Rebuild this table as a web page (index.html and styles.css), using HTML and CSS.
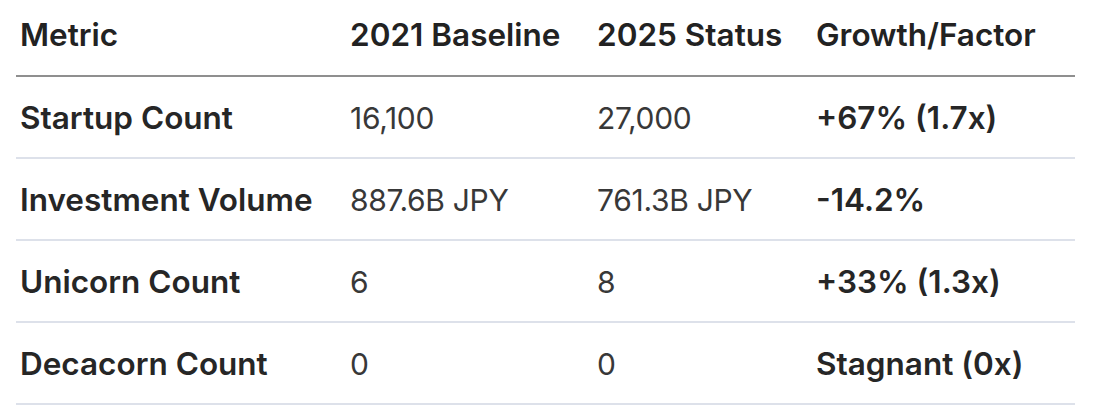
FILE: index.html
```html
<!DOCTYPE html>
<html>
<head>
<meta charset="utf-8">
<link rel="stylesheet" href="styles.css">
</head>
<body>
<table class="data-table">
  <colgroup>
    <col class="c1"><col class="c2"><col class="c3"><col class="c4">
  </colgroup>
  <thead>
    <tr><th>Metric</th><th>2021 Baseline</th><th>2025 Status</th><th>Growth/Factor</th></tr>
  </thead>
  <tbody>
    <tr><td class="label">Startup Count</td><td>16,100</td><td>27,000</td><td class="strong">+67% (1.7x)</td></tr>
    <tr><td class="label">Investment Volume</td><td>887.6B JPY</td><td>761.3B JPY</td><td class="strong">-14.2%</td></tr>
    <tr><td class="label">Unicorn Count</td><td>6</td><td>8</td><td class="strong">+33% (1.3x)</td></tr>
    <tr><td class="label">Decacorn Count</td><td>0</td><td>0</td><td class="strong">Stagnant (0x)</td></tr>
  </tbody>
</table>
</body>
</html>
```
FILE: styles.css
```css
html, body {
  margin: 0;
  padding: 0;
  background: #ffffff;
}
body {
  font-family: Inter, "Liberation Sans", sans-serif;
  color: #2b2b2b;
}
.data-table {
  margin-left: 16px;
  width: 1059px;
  border-collapse: collapse;
  table-layout: fixed;
  font-size: 30px;
  line-height: 44px;
}
.c1 { width: 330px; }
.c2 { width: 247px; }
.c3 { width: 219px; }
.c4 { width: 263px; }
th, td {
  text-align: left;
  padding: 0 0 0 4px;
  white-space: nowrap;
}
th {
  font-size: 31.5px;
  font-weight: 600;
  color: #222222;
  height: 76px;
  padding-top: 0;
  padding-bottom: 6px;
  box-sizing: border-box;
  border-bottom: 2px solid #8f8f8f;
}
td {
  height: 82px;
  box-sizing: border-box;
  padding-top: 2px;
  padding-bottom: 0;
  border-bottom: 2px solid #dde1ea;
  font-weight: 400;
  color: #383838;
  letter-spacing: -0.3px;
}
td.label, td.strong {
  font-size: 31.5px;
  font-weight: 600;
  color: #262626;
  letter-spacing: 0;
}
```
